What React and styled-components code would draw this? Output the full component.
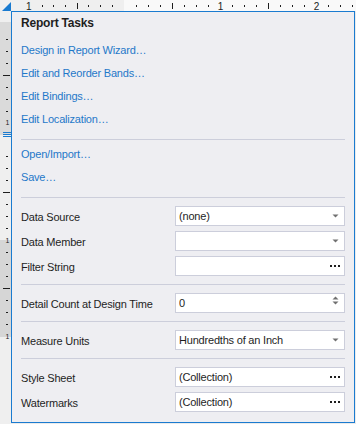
import React from 'react';
import styled, { createGlobalStyle } from 'styled-components';

const GlobalStyle = createGlobalStyle`
  html, body { margin: 0; padding: 0; background: #ececec; }
  body { font-family: "Liberation Sans", Arial, sans-serif; }
`;

const Screen = styled.div`
  display: grid;
  grid-template-columns: 11px 345px;
  grid-template-rows: 11px 413px;
  width: 356px;
  height: 424px;
  overflow: hidden;
  background: #ececec;
`;

const Corner = styled.div`
  background: #f0f0f0;
  display: flex;
`;

const RulerCell = styled.div`
  display: flex;
  overflow: hidden;
`;

const Surface = styled.div`
  background: #ebebeb;
`;

const Panel = styled.div`
  width: 344px;
  height: 412px;
  box-sizing: border-box;
  border: 1px solid #1a7bd0;
  background: #eeeef2;
  display: flex;
  flex-direction: column;
  font-family: "Liberation Sans", Arial, sans-serif;
  font-size: 11px;
  letter-spacing: -0.2px;
  color: #1e1e1e;
`;

const Section = styled.div`
  margin: 0 9px;
  padding: ${(p) => p.$pad};
  border-bottom: ${(p) => (p.$last ? 'none' : '1px solid #cccedb')};
  display: flex;
  flex-direction: column;
  gap: ${(p) => p.$gap || 0}px;
`;

const Title = styled.div`
  font-weight: bold;
  font-size: 12px;
  line-height: 23px;
  color: #1e1e1e;
`;

const LinkList = styled.div`
  display: flex;
  flex-direction: column;
  margin-top: ${(p) => p.$top || 0}px;
`;

const TaskLink = styled.a`
  display: block;
  line-height: 23px;
  color: #1f78c9;
  text-decoration: none;
  cursor: pointer;
  align-self: flex-start;
`;

const PropRow = styled.div`
  display: grid;
  grid-template-columns: 154px 170px;
  height: 20px;
`;

const PropLabel = styled.div`
  padding-top: 2px;
  line-height: 18px;
  white-space: nowrap;
`;

const Field = styled.div`
  box-sizing: border-box;
  height: 20px;
  border: 1px solid #cccedb;
  background: #ffffff;
  display: flex;
  align-items: ${(p) => (p.$top ? 'flex-start' : 'center')};
  padding: 0 ${(p) => p.$right}px 0 3px;
`;

const FieldText = styled.div`
  flex: 1;
  align-self: stretch;
  line-height: 18px;
  white-space: nowrap;
  overflow: hidden;
`;

const Glyph = styled.svg`
  flex: none;
  display: block;
  margin-top: ${(p) => p.$mt || 0}px;
`;

const DropArrow = () => (
  <Glyph width="7" height="4" viewBox="0 0 7 4">
    <polygon points="0.5,0.5 6.5,0.5 3.5,3.5" fill="#707070" />
  </Glyph>
);

const Dots = () => (
  <Glyph width="10" height="2" viewBox="0 0 10 2">
    <rect x="0" y="0" width="2" height="2" fill="#1e1e1e" />
    <rect x="4" y="0" width="2" height="2" fill="#1e1e1e" />
    <rect x="8" y="0" width="2" height="2" fill="#1e1e1e" />
  </Glyph>
);

const SpinArrows = () => (
  <Glyph width="7" height="9" viewBox="0 0 7 9" $mt={2}>
    <polygon points="0.5,3.5 6.5,3.5 3.5,0.5" fill="#707070" />
    <polygon points="0.5,5.5 6.5,5.5 3.5,8.5" fill="#707070" />
  </Glyph>
);

const Prop = ({ label, value, kind }) => {
  const right = kind === 'dots' ? 4 : 5;
  return (
    <PropRow>
      <PropLabel>{label}</PropLabel>
      <Field $right={right} $top={kind === 'spin'}>
        <FieldText>{value}</FieldText>
        {kind === 'drop' && <DropArrow />}
        {kind === 'dots' && <Dots />}
        {kind === 'spin' && <SpinArrows />}
      </Field>
    </PropRow>
  );
};

/* ---------- rulers (drawings) ---------- */

const TopRuler = () => {
  const ox = 11;
  const marks = [];
  const margin = [111.7, 100, 88.3, 76.7, 65, 53.3, 41.7];
  margin.forEach((x, i) => {
    const long = i === 3;
    marks.push(
      <rect key={'m' + i} x={Math.round(x) - ox} y={long ? 3 : 5} width="1" height={long ? 6 : 2} fill="#1e1e1e" />
    );
  });
  const nums = [];
  nums.push(<text key="n0" x={28.7 - ox} y="10" fontSize="10" textAnchor="middle" fill="#222" fontFamily="Liberation Sans, Arial, sans-serif">1</text>);
  for (let k = 1; k <= 19; k++) {
    const x = 124 + 12 * k;
    if (k % 8 === 0) {
      nums.push(<text key={'n' + k} x={x - ox + 0.5} y="10" fontSize="10" textAnchor="middle" fill="#222" fontFamily="Liberation Sans, Arial, sans-serif">{k / 8}</text>);
    } else {
      const long = k % 4 === 0;
      marks.push(<rect key={'p' + k} x={x - ox} y={long ? 3 : 5} width="1" height={long ? 6 : 2} fill="#1e1e1e" />);
    }
  }
  return (
    <svg width="345" height="11" viewBox="0 0 345 11" style={{ display: 'block' }}>
      <rect x="0" y="0" width={124 - ox} height="11" fill="#efefef" />
      <rect x={124 - ox} y="0" width={345 - (124 - ox)} height="11" fill="#f9f9f9" />
      {marks}
      {nums}
    </svg>
  );
};

const LeftRuler = () => {
  const oy = 11;
  const marks = [];
  const a = [39, 51, 63, 75, 87, 99, 111];
  a.forEach((y, i) => {
    const long = i === 3;
    marks.push(<rect key={'a' + i} x={long ? 3 : 6} y={y - oy} width={long ? 7 : 2} height="1" fill="#1e1e1e" />);
  });
  const nums = [122, 240, 336];
  for (let k = 1; k <= 16; k++) {
    const y = 144 + 12 * k;
    if (k % 8 === 0) continue;
    const long = k % 4 === 0;
    marks.push(<rect key={'b' + k} x={long ? 3 : 6} y={y - oy} width={long ? 7 : 2} height="1" fill="#1e1e1e" />);
  }
  return (
    <svg width="11" height="413" viewBox="0 0 11 413" style={{ display: 'block' }}>
      <rect x="0" y="0" width="11" height="413" fill="#efefef" />
      <rect x="0" y={22 - oy} width="11" height={135 - 22} fill="#dadada" />
      <rect x="0" y={240 - oy} width="11" height={337 - 240} fill="#d6d6d6" />
      {marks}
      {nums.map((y) => (
        <text key={'t' + y} x="7.5" y={y - oy + 3} fontSize="7" textAnchor="middle" fill="#222" fontFamily="Liberation Sans, Arial, sans-serif">1</text>
      ))}
      <rect x="3" y={132 - oy} width="8" height="1" fill="#1a7bd0" />
      <rect x="3" y={134 - oy} width="8" height="1" fill="#1a7bd0" />
      <rect x="3" y={136 - oy} width="8" height="1" fill="#1a7bd0" />
    </svg>
  );
};

const CornerMark = () => (
  <svg width="11" height="11" viewBox="0 0 11 11" style={{ display: 'block' }}>
    <polygon points="2,11 11,2 11,11" fill="#1a7bd0" />
  </svg>
);

export default function App() {
  return (
    <>
      <GlobalStyle />
      <Screen>
        <Corner>
          <CornerMark />
        </Corner>
        <RulerCell>
          <TopRuler />
        </RulerCell>
        <RulerCell>
          <LeftRuler />
        </RulerCell>
        <Surface>
          <Panel>
            <Section $pad="0 0 8px">
              <Title>Report Tasks</Title>
              <LinkList $top={4}>
                <TaskLink>Design in Report Wizard…</TaskLink>
                <TaskLink>Edit and Reorder Bands…</TaskLink>
                <TaskLink>Edit Bindings…</TaskLink>
                <TaskLink>Edit Localization…</TaskLink>
              </LinkList>
            </Section>
            <Section $pad="3px 0 8px">
              <LinkList>
                <TaskLink>Open/Import…</TaskLink>
                <TaskLink>Save…</TaskLink>
              </LinkList>
            </Section>
            <Section $pad="8px 0" $gap={5}>
              <Prop label="Data Source" value="(none)" kind="drop" />
              <Prop label="Data Member" value="" kind="drop" />
              <Prop label="Filter String" value="" kind="dots" />
            </Section>
            <Section $pad="8px 0">
              <Prop label="Detail Count at Design Time" value="0" kind="spin" />
            </Section>
            <Section $pad="8px 0">
              <Prop label="Measure Units" value="Hundredths of an Inch" kind="drop" />
            </Section>
            <Section $pad="8px 0" $gap={5} $last>
              <Prop label="Style Sheet" value="(Collection)" kind="dots" />
              <Prop label="Watermarks" value="(Collection)" kind="dots" />
            </Section>
          </Panel>
        </Surface>
      </Screen>
    </>
  );
}
